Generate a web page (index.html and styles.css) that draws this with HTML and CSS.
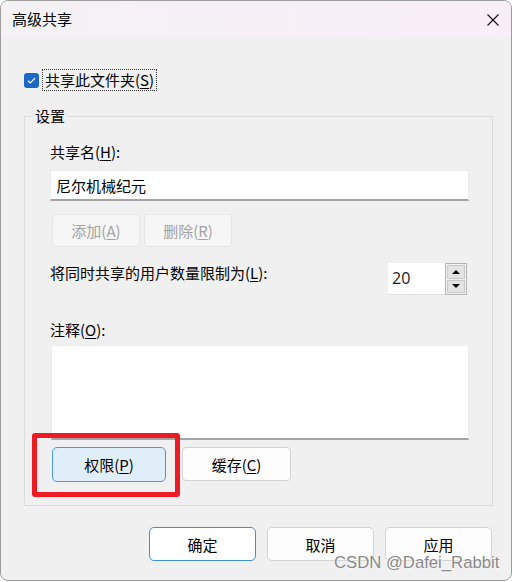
FILE: index.html
```html
<!DOCTYPE html>
<html>

<head>
    <title>高级共享</title>
    <link rel="stylesheet" href="styles.css">
</head>

<body>
    <div class="window">
        <div class="titlebar">
            <span class="title">高级共享</span>
            <svg class="close" width="12" height="12" viewBox="0 0 12 12">
                <path d="M0.5 0.5L11.5 11.5M11.5 0.5L0.5 11.5" stroke="#111" stroke-width="1.1" fill="none"/>
            </svg>
        </div>

        <div class="content">
            <div class="share-row">
                <span class="checkbox">
                    <svg width="15" height="15" viewBox="0 0 15 15">
                        <path d="M4 7.8L6.3 10L11 5.2" stroke="#fff" stroke-width="1.2" fill="none"/>
                    </svg>
                </span>
                <span class="focus-label">共享此文件夹(<u>S</u>)</span>
            </div>

            <fieldset class="group">
                <legend>设置</legend>
                <div class="group-body">
                    <div class="label name-label">共享名(<u>H</u>):</div>
                    <div class="textbox">尼尔机械纪元</div>

                    <div class="btn-row">
                        <button class="btn disabled">添加(<u>A</u>)</button>
                        <button class="btn disabled">删除(<u>R</u>)</button>
                    </div>

                    <div class="limit-row">
                        <span class="label">将同时共享的用户数量限制为(<u>L</u>):</span>
                        <div class="spin">
                            <span class="spin-value">20</span>
                            <div class="spin-buttons">
                                <span class="spin-btn"><i class="arrow-up"></i></span>
                                <span class="spin-btn"><i class="arrow-down"></i></span>
                            </div>
                        </div>
                    </div>

                    <div class="label comment-label">注释(<u>O</u>):</div>
                    <div class="textarea"></div>

                    <div class="btn-row perm-row">
                        <button class="btn focused perm">权限(<u>P</u>)</button>
                        <button class="btn cache">缓存(<u>C</u>)</button>
                    </div>
                </div>
            </fieldset>

            <div class="footer">
                <button class="btn dialog default">确定</button>
                <button class="btn dialog">取消</button>
                <button class="btn dialog">应用</button>
            </div>
        </div>

        <!-- annotation drawn over the screenshot -->
        <div class="highlight"></div>
        <div class="watermark">CSDN @Dafei_Rabbit</div>
    </div>
</body>

</html>
```

FILE: styles.css
```css
body {
    margin: 0;
    background-color: #fff;
    font-family: "Noto Sans CJK SC", "Liberation Sans", sans-serif;
    font-size: 15px;
    color: #000;
}

.window {
    position: relative;
    box-sizing: border-box;
    width: 512px;
    height: 581px;
    border: 1px solid #9c9c9c;
    border-radius: 8px;
    background-color: #f0f0f0;
    overflow: hidden;
}

.titlebar {
    height: 37px;
    display: flex;
    align-items: center;
    justify-content: space-between;
    padding: 0 12px 0 11px;
    background: linear-gradient(to right, #f4f2f5, #f8eef8);
}

.title {
    font-size: 15px;
    line-height: 20px;
    margin-top: -1px;
}

.close {
    display: block;
}

.content {
    padding: 31px 18px 0 23px;
}

.share-row {
    display: flex;
    align-items: center;
    height: 22px;
}

.checkbox {
    width: 15px;
    height: 15px;
    border-radius: 3px;
    background-color: #1b67c6;
}

.checkbox svg {
    display: block;
}

.focus-label {
    margin-left: 3px;
    padding: 0 2px;
    line-height: 20px;
    border: 1px dotted #333;
}

u {
    text-decoration-thickness: 1px;
    text-underline-offset: 2px;
}

.group {
    margin: 16px 0 0 0;
    padding: 0;
    min-width: 0;
    border: 1px solid #dcdcdc;
}

.group legend {
    margin-left: 8px;
    padding: 0 2px;
    line-height: 18px;
}

.group-body {
    padding: 0 23px 23px 25px;
}

.label {
    line-height: 20px;
}

.name-label {
    margin-top: 17px;
}

.textbox {
    box-sizing: border-box;
    height: 31px;
    margin-top: 8px;
    padding: 0 5px;
    line-height: 29px;
    background-color: #fff;
    border: 1px solid #ececec;
    border-bottom: 2px solid #a4a4a4;
}

.btn {
    box-sizing: border-box;
    font-family: inherit;
    font-size: 15px;
    color: #000;
    padding: 0;
    border-radius: 4px;
    border: 1px solid #d3d3d3;
    background-color: #fdfdfd;
}

.btn-row {
    display: flex;
    gap: 4px;
    margin-top: 13px;
    padding-left: 2px;
}

.btn-row .btn {
    width: 88px;
    height: 33px;
}

.btn.disabled {
    color: #a3a3a3;
    background-color: #f6f6f6;
    border-color: #e6e6e6;
}

.limit-row {
    display: flex;
    justify-content: space-between;
    align-items: flex-start;
    margin-top: 16px;
}

.spin {
    display: flex;
    width: 79px;
    height: 32px;
    margin-right: 2px;
}

.spin-value {
    flex: 1;
    padding-left: 4px;
    line-height: 31px;
    font-size: 16px;
    font-family: "Open Sans", "Liberation Sans", sans-serif;
    color: #1a1a1a;
    background-color: #fff;
    border-bottom: 1px solid #e0e0e0;
}

.spin-buttons {
    box-sizing: border-box;
    width: 22px;
    display: flex;
    flex-direction: column;
    gap: 1px;
    padding: 1px;
    border: 1px solid #b4b4b4;
    background-color: #f2f2f2;
}

.spin-btn {
    flex: 1;
    display: flex;
    align-items: center;
    justify-content: center;
    border: 1px solid #c9c9c9;
    background-color: #e4e4e4;
}

.arrow-up,
.arrow-down {
    width: 0;
    height: 0;
    border-left: 4px solid transparent;
    border-right: 4px solid transparent;
}

.arrow-up {
    border-bottom: 4px solid #000;
}

.arrow-down {
    border-top: 4px solid #000;
}

.comment-label {
    margin-top: 25px;
}

.textarea {
    box-sizing: border-box;
    height: 95px;
    margin-top: 5px;
    margin-left: 1px;
    background-color: #fff;
    border: 1px solid #ececec;
    border-bottom: 2px solid #a4a4a4;
}

.perm-row {
    gap: 16px;
    margin-top: 7px;
}

.perm-row .btn.perm {
    width: 114px;
    height: 35px;
}

.perm-row .btn.cache {
    width: 109px;
    height: 34px;
}

.btn.focused {
    background-color: #e0eef9;
    border-color: #4d98e2;
    border-radius: 5px;
}

.footer {
    display: flex;
    justify-content: flex-end;
    gap: 11px;
    margin-top: 21px;
    padding-right: 1px;
}

.btn.dialog {
    width: 107px;
    height: 34px;
    border-radius: 5px;
}

.btn.dialog.default {
    background-color: #fff;
    border: 1.5px solid #3d8fe0;
}

.highlight {
    position: absolute;
    left: 31px;
    top: 432px;
    width: 148px;
    height: 64px;
    box-sizing: border-box;
    border: 5px solid #ed1c24;
    border-radius: 3px;
}

.watermark {
    position: absolute;
    left: 333px;
    top: 553px;
    font-family: "Liberation Sans", Arial, sans-serif;
    font-size: 16.7px;
    line-height: 18px;
    color: #888;
    text-shadow: 0 0 2px #fff, 0 0 2px #fff;
}
```
